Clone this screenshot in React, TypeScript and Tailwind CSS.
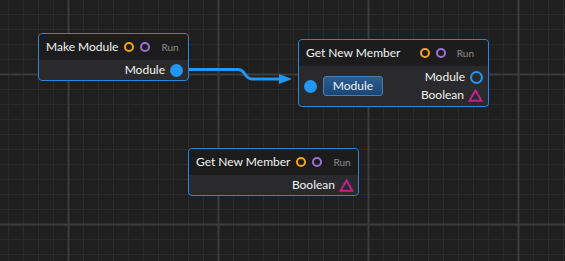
import React from 'react';

const font = "font-['Lato','Segoe_UI',sans-serif]";

const Ring = ({ color }: { color: string }) => (
  <span className={`w-[10px] h-[10px] rounded-full border-2 ${color}`} />
);

const Header = ({ title, spread }: { title: string; spread?: boolean }) => (
  <div className="h-[26px] flex items-center pl-[7px] pr-[14px] bg-[#1c1c1d] rounded-t-[4px] whitespace-nowrap">
    <span className="text-[12px] text-[#f2f2f2] leading-none">{title}</span>
    <div className={`flex items-center gap-[6px] ${spread ? 'ml-auto' : 'ml-[6px]'}`}>
      <Ring color="border-[#f2a516]" />
      <Ring color="border-[#9b72d4]" />
      <span className="ml-[5px] text-[10px] text-[#8c8c8c] leading-none">Run</span>
    </div>
  </div>
);

const FilledPin = () => <span className="w-[13px] h-[13px] rounded-full bg-[#2196f3]" />;
const HollowPin = () => <span className="w-[13px] h-[13px] rounded-full border-2 border-[#2196f3]" />;
const TrianglePin = () => (
  <svg width="15" height="13" viewBox="0 0 15 13">
    <polygon points="7.5,1.5 13.5,11.8 1.5,11.8" fill="none" stroke="#c4208a" strokeWidth="2" strokeLinejoin="miter" />
  </svg>
);

const Grid = () => (
  <svg className="absolute inset-0" width="565" height="261">
    <defs>
      <pattern id="minor" x="8" y="14" width="15" height="15" patternUnits="userSpaceOnUse">
        <rect x="0" y="0" width="1" height="15" fill="#2a2a2a" />
        <rect x="0" y="0" width="15" height="1" fill="#2a2a2a" />
      </pattern>
    </defs>
    <rect width="565" height="261" fill="#1f1f1f" />
    <rect width="565" height="261" fill="url(#minor)" />
    {[68, 218, 368, 518].map((x) => (
      <rect key={x} x={x - 0.5} y="0" width="2" height="261" fill="#3c3c3c" />
    ))}
    {[74, 224].map((y) => (
      <rect key={y} x="0" y={y - 0.5} width="565" height="2" fill="#3c3c3c" />
    ))}
  </svg>
);

export default function App() {
  return (
    <div className={`relative w-[565px] h-[261px] overflow-hidden bg-[#1f1f1f] ${font}`}>
      <Grid />

      {/* link */}
      <svg className="absolute inset-0" width="565" height="261">
        <path d="M183 69.5 H238 C246 69.5 244 79 252 79 H281" fill="none" stroke="#2196f3" strokeWidth="3" />
        <polygon points="279,74 292,79 279,84" fill="#2196f3" />
      </svg>

      {/* Make Module */}
      <div className="absolute left-[38px] top-[33px] w-[151px] border border-[#2a86de] rounded-[4px] bg-[#2a2a2d]">
        <Header title="Make Module" />
        <div className="h-[20px] flex items-center justify-end gap-[5px] pr-[5px]">
          <span className="text-[12px] text-[#f2f2f2] leading-none">Module</span>
          <FilledPin />
        </div>
      </div>

      {/* Get New Member (linked) */}
      <div className="absolute left-[298px] top-[39px] w-[191px] border border-[#2a86de] rounded-[4px] bg-[#2a2a2d]">
        <Header title="Get New Member" spread />
        <div className="h-[40px] flex items-center pl-[5px] pr-[5px]">
          <FilledPin />
          <span className="ml-[6px] w-[60px] h-[20px] flex items-center justify-center rounded-[3px] border border-[#4a7db3] bg-[linear-gradient(#2c5d90,#1b4577)] text-[12px] text-[#f2f2f2] leading-none">
            Module
          </span>
          <div className="ml-auto flex flex-col items-end gap-[5px]">
            <div className="flex items-center gap-[5px]">
              <span className="text-[12px] text-[#f2f2f2] leading-none">Module</span>
              <HollowPin />
            </div>
            <div className="flex items-center gap-[4px]">
              <span className="text-[12px] text-[#f2f2f2] leading-none">Boolean</span>
              <TrianglePin />
            </div>
          </div>
        </div>
      </div>

      {/* Get New Member */}
      <div className="absolute left-[188px] top-[148px] w-[171px] border border-[#2a86de] rounded-[4px] bg-[#2a2a2d]">
        <Header title="Get New Member" />
        <div className="h-[20px] flex items-center justify-end gap-[4px] pr-[4px]">
          <span className="text-[12px] text-[#f2f2f2] leading-none">Boolean</span>
          <TrianglePin />
        </div>
      </div>
    </div>
  );
}
